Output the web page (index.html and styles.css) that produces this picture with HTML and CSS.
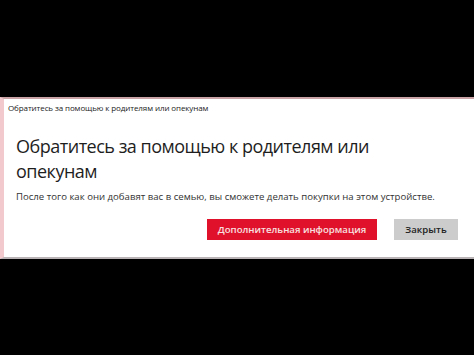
FILE: index.html
```html
<!DOCTYPE html>
<html>
<head>
<meta charset="utf-8">
<link rel="stylesheet" href="styles.css">
</head>
<body>
<div class="top"></div>
<div class="dialog">
  <div class="titlebar">Обратитесь за помощью к родителям или опекунам</div>
  <div class="content">
    <h1 class="heading">Обратитесь за помощью к родителям или опекунам</h1>
    <p class="text">После того как они добавят вас в семью, вы сможете делать покупки на этом устройстве.</p>
    <div class="actions">
      <button class="btn primary">Дополнительная информация</button>
      <button class="btn secondary">Закрыть</button>
    </div>
  </div>
</div>
</body>
</html>
```
FILE: styles.css
```css
html, body {
  margin: 0;
  padding: 0;
  background: #000;
  width: 474px;
  height: 355px;
  overflow: hidden;
  font-family: "Open Sans", "Noto Sans", sans-serif;
}
.top {
  height: 97px;
}
.dialog {
  background: #fff;
  border-top: 2px solid #c9a3a6;
  border-bottom: 2px solid #b9b3b5;
  border-left: 4px solid #f2c9cd;
  height: 158px;
  box-sizing: content-box;
}
.titlebar {
  font-size: 8px;
  letter-spacing: -0.1px;
  color: #222;
  padding: 2px 0 0 4px;
  height: 19px;
  line-height: 14px;
}
.content {
  padding: 14px 16px 0 12px;
}
.heading {
  margin: 0;
  font-weight: 400;
  font-size: 18px;
  letter-spacing: -0.5px;
  line-height: 25px;
  color: #1e1e1e;
  width: 375px;
}
.text {
  margin: 6px 0 0 0;
  font-size: 9.6px;
  line-height: 14px;
  color: #333;
}
.actions {
  display: flex;
  justify-content: flex-end;
  gap: 17px;
  margin-top: 15px;
}
.btn {
  font-family: inherit;
  font-size: 9.6px;
  font-weight: 600;
  border: none;
  height: 21px;
  padding: 0;
}
.primary {
  background: #e0112a;
  color: #f8e0e0;
  width: 170px;
}
.secondary {
  background: #cccccc;
  color: #222;
  width: 64px;
}
```
